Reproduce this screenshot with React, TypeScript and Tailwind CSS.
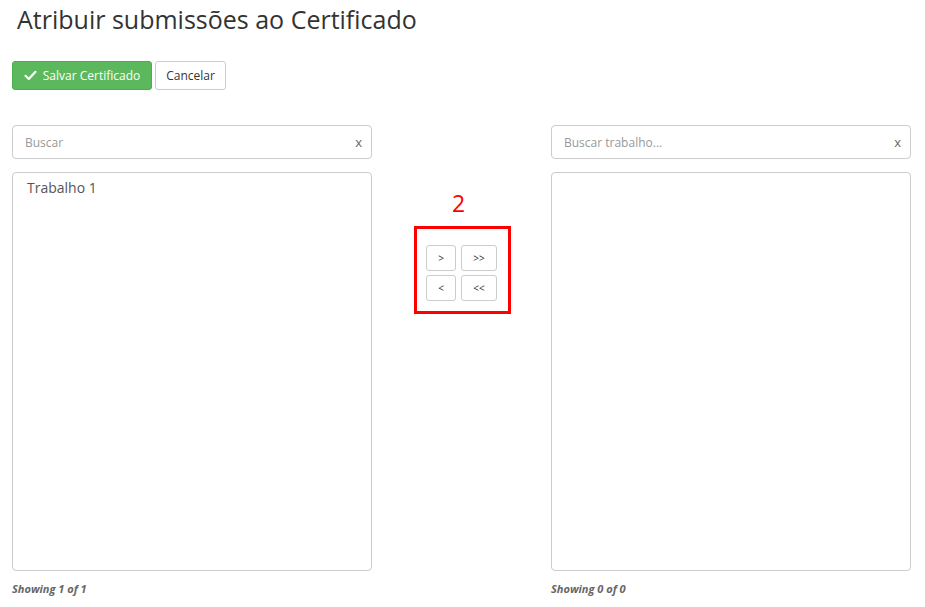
import React from "react";

function SearchBox({ placeholder }: { placeholder: string }) {
  return (
    <div className="relative h-[34px] w-full rounded-[4px] border border-[#ccc] bg-white">
      <input
        className="h-full w-full bg-transparent pl-3 pr-8 text-[12px] text-[#555] placeholder:text-[#999] outline-none"
        placeholder={placeholder}
      />
      <span className="absolute right-[9px] top-[7px] text-[13px] text-[#666]">x</span>
    </div>
  );
}

function MoveBtn({ label, wide }: { label: string; wide?: boolean }) {
  return (
    <button
      className={`${wide ? "w-[36px]" : "w-[30px]"} h-[26px] rounded-[3px] border border-[#ccc] bg-white text-[10px] leading-none text-[#333]`}
    >
      {label}
    </button>
  );
}

export default function App() {
  return (
    <div
      className="min-h-[607px] w-[925px] bg-white text-[#333]"
      style={{ fontFamily: "'Open Sans', sans-serif" }}
    >
      <h1 className="pl-[17px] pt-[2px] text-[25px] font-normal leading-[34px] text-[#333]">
        Atribuir submissões ao Certificado
      </h1>
      <div className="mt-[25px] flex gap-[3px] pl-[12px]">
        <button className="flex h-[29px] w-[140px] items-center justify-center gap-[6px] rounded-[3px] border border-[#4cae4c] bg-[#5cb85c] text-[12px] text-white">
          <svg width="13" height="11" viewBox="0 0 13 11" fill="none">
            <path d="M1.5 5.8 L4.8 9 L11.5 1.8" stroke="white" strokeWidth="2.2" strokeLinecap="round" strokeLinejoin="round" />
          </svg>
          Salvar Certificado
        </button>
        <button className="h-[29px] w-[71px] rounded-[3px] border border-[#ccc] bg-white text-[12px] text-[#333]">
          Cancelar
        </button>
      </div>
      <div className="mt-[35px] flex pl-[12px]">
        <div className="flex w-[360px] flex-col">
          <SearchBox placeholder="Buscar" />
          <div className="mt-[13px] h-[399px] rounded-[4px] border border-[#ccc] px-[14px] pt-[4px]">
            <div className="text-[14px] text-[#555]">Trabalho 1</div>
          </div>
          <div className="mt-[10px] text-[11px] font-bold italic text-[#666]">Showing 1 of 1</div>
        </div>
        <div className="flex w-[179px] flex-col items-center pt-[63px]">
          <div className="ml-[-6px] text-[23px] leading-[30px] text-[#ff0000]">2</div>
          <div className="mt-[8px] ml-[2px] flex flex-col gap-[4px] border-[3px] border-[#ff0000] pb-[10px] pl-[9px] pr-[11px] pt-[16px]">
            <div className="flex gap-[5px]">
              <MoveBtn label=">" />
              <MoveBtn label=">>" wide />
            </div>
            <div className="flex gap-[5px]">
              <MoveBtn label="<" />
              <MoveBtn label="<<" wide />
            </div>
          </div>
        </div>
        <div className="flex w-[360px] flex-col">
          <SearchBox placeholder="Buscar trabalho..." />
          <div className="mt-[13px] h-[399px] rounded-[4px] border border-[#ccc]" />
          <div className="mt-[10px] text-[11px] font-bold italic text-[#666]">Showing 0 of 0</div>
        </div>
      </div>
    </div>
  );
}
